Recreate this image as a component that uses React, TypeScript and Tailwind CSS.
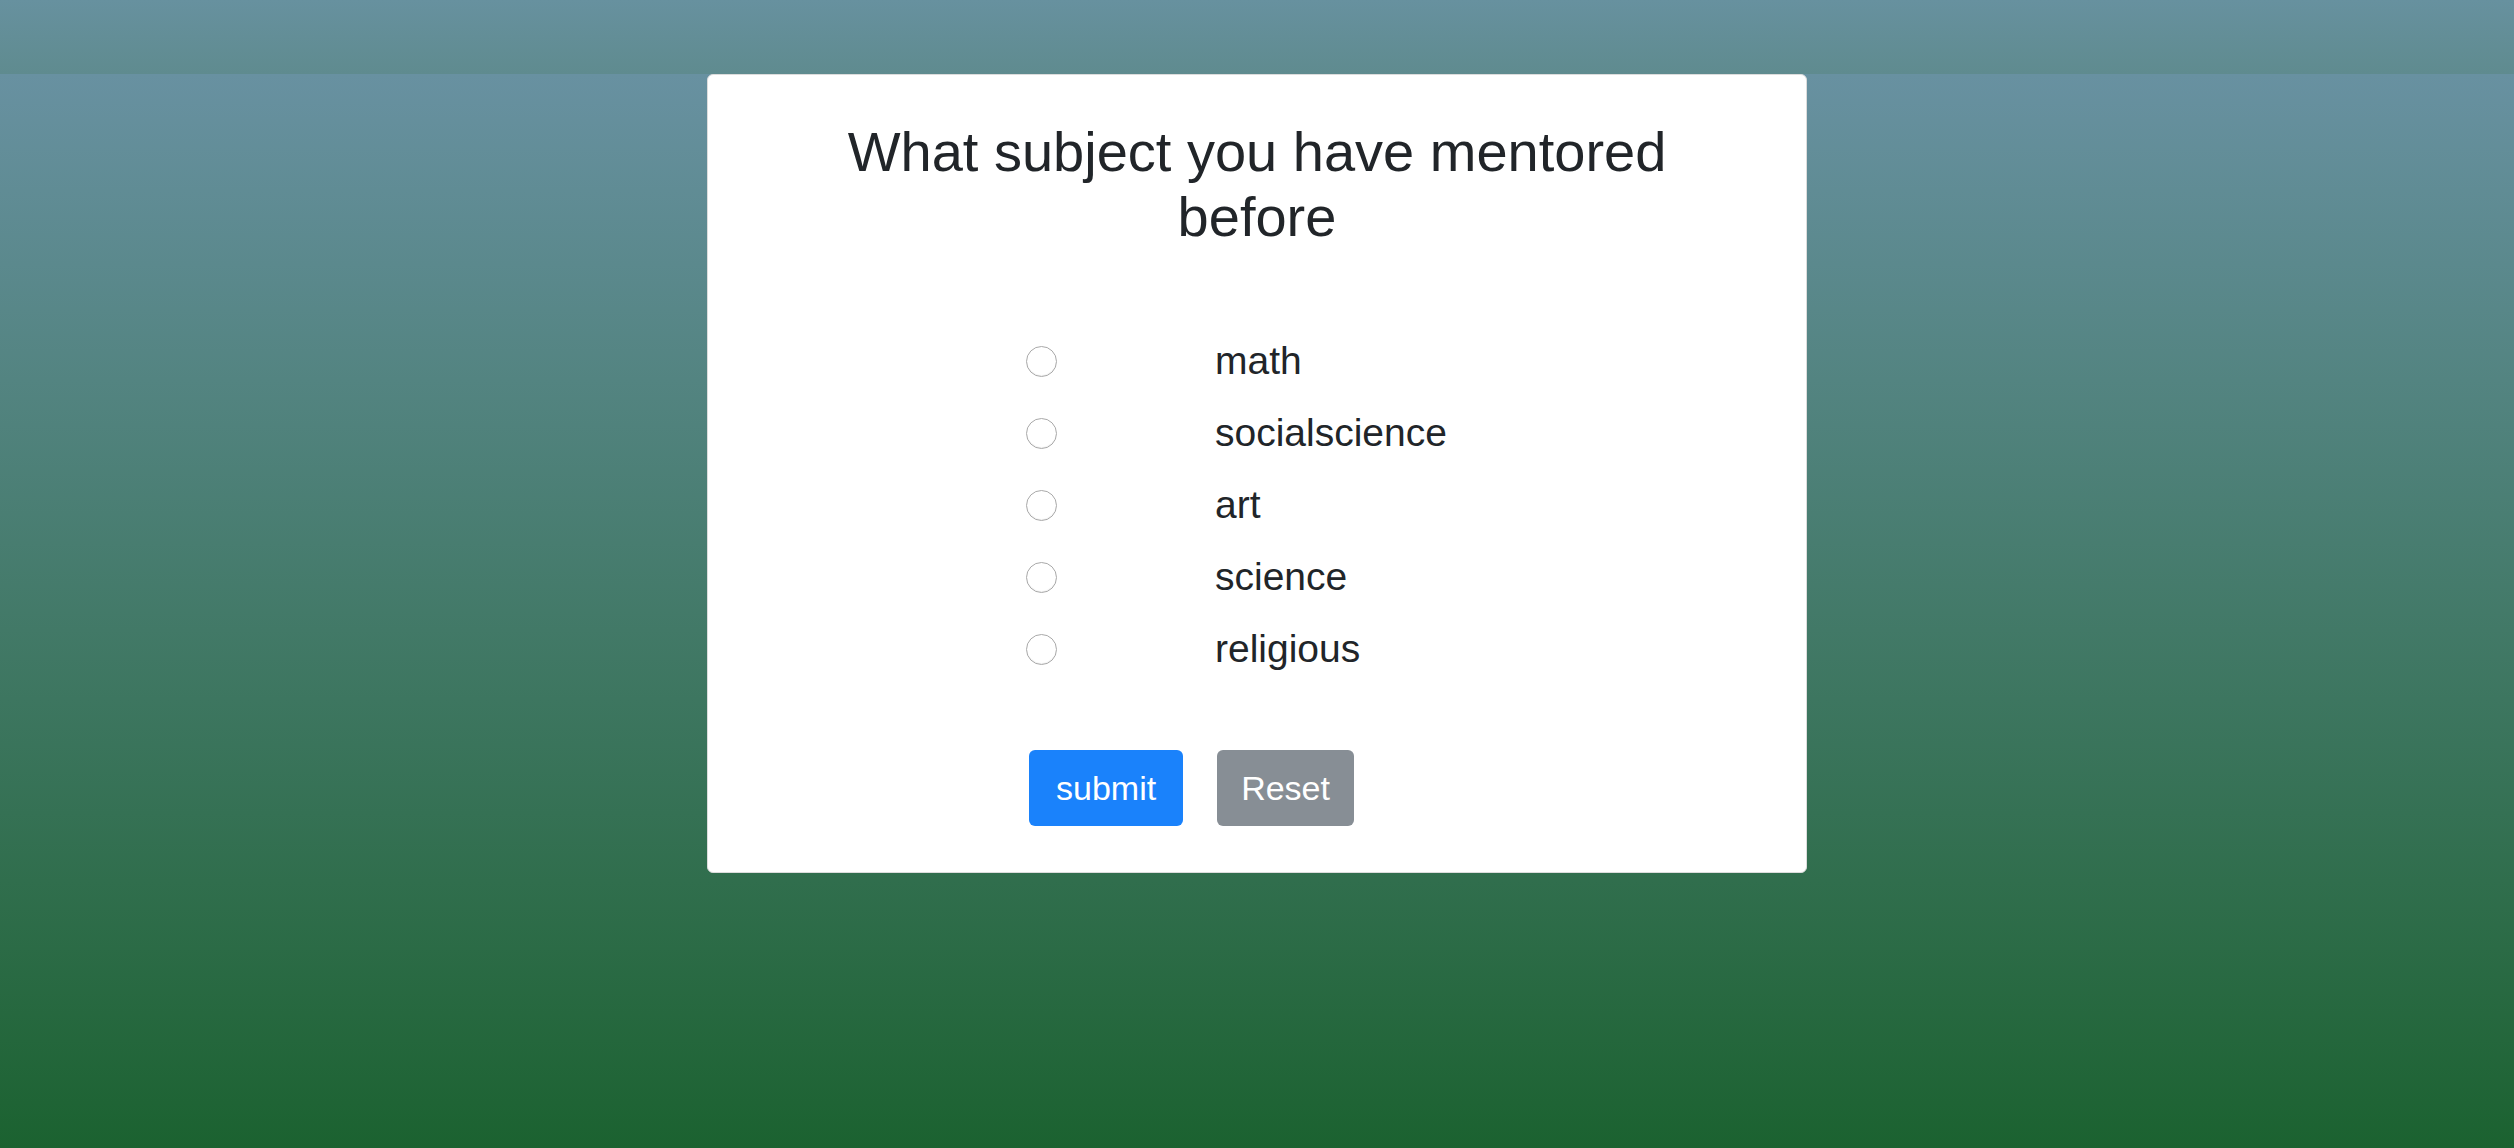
import { useState } from 'react'

const subjects = ['math', 'socialscience', 'art', 'science', 'religious']

export default function App() {
  const [picked, setPicked] = useState<string | null>(null)

  return (
    <div className="min-h-screen flex flex-col font-['Liberation_Sans',Arial,sans-serif] text-[#212529]">
      {/* top strip */}
      <div className="h-[74px] bg-gradient-to-b from-[#67919f] to-[#5f8b8f]" />

      <div className="flex-1 bg-gradient-to-b from-[#6891a1] to-[#1b6230]">
        <div className="w-[1100px] mx-auto bg-white border border-[#dcdcdc] rounded-[6px] pt-[44px] pb-[46px]">
          <h1 className="w-[900px] mx-auto text-center text-[56px] leading-[65px] font-normal">
            What subject you have mentored before
          </h1>

          {/* options */}
          <div className="mt-[76px] pl-[318px] flex flex-col">
            {subjects.map((s) => (
              <label key={s} className="h-[72px] flex items-center cursor-pointer" onClick={() => setPicked(s)}>
                <span className="w-[31px] h-[31px] rounded-full border border-[#a9a9a9] bg-white shadow-[inset_0_-1px_1px_rgba(0,0,0,0.06)] flex items-center justify-center shrink-0">
                  {picked === s && <span className="w-[13px] h-[13px] rounded-full bg-[#1a82fb]" />}
                </span>
                <span className="ml-[158px] text-[39px] leading-[72px]">{s}</span>
              </label>
            ))}
          </div>

          {/* actions */}
          <div className="mt-[65px] pl-[321px] flex gap-[34px]">
            <button
              type="button"
              className="h-[76px] px-[27px] rounded-[6px] bg-[#1a82fb] text-white text-[34px] leading-none"
            >
              submit
            </button>
            <button
              type="button"
              onClick={() => setPicked(null)}
              className="h-[76px] px-[24px] rounded-[6px] bg-[#878e95] text-white text-[34px] leading-none"
            >
              Reset
            </button>
          </div>
        </div>
      </div>
    </div>
  )
}
